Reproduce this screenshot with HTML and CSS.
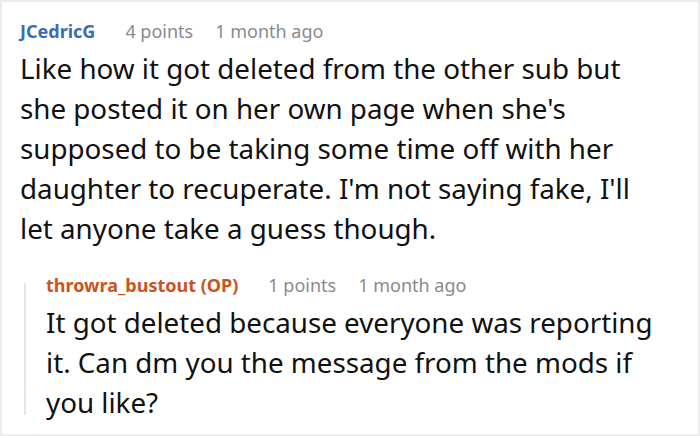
FILE: index.html
```html
<!DOCTYPE html>
<html>
<head>
<meta charset="utf-8">
<link rel="stylesheet" href="styles.css">
</head>
<body>
<div class="card">
  <div class="comment">
    <div class="meta">
      <span class="author">JCedricG</span>
      <span class="info">4 points</span>
      <span class="info">1 month ago</span>
    </div>
    <p class="text">Like how it got deleted from the other sub but she posted it on her own page when she's supposed to be taking some time off with her daughter to recuperate. I'm not saying fake, I'll let anyone take a guess though.</p>
    <div class="reply">
      <div class="meta">
        <span class="author op">throwra_bustout (OP)</span>
        <span class="info">1 points</span>
        <span class="info">1 month ago</span>
      </div>
      <p class="text">It got deleted because everyone was reporting it. Can dm you the message from the mods if you like?</p>
    </div>
  </div>
</div>
</body>
</html>
```

FILE: styles.css
```css
html, body {
  margin: 0;
  padding: 0;
  background: #ffffff;
}
.card {
  box-sizing: border-box;
  width: 700px;
  height: 436px;
  border: 2px solid #ececec;
  background: #fff;
  font-family: "Noto Sans", "Open Sans", sans-serif;
  overflow: hidden;
}
.comment {
  padding: 16px 34px 0 18px;
}
.meta {
  display: flex;
  gap: 22px;
  font-size: 18px;
  line-height: 26px;
}
.author {
  color: #3b6cb0;
  font-weight: 700;
  margin-right: 8px;
}
.author.op {
  color: #c9541e;
}
.info {
  color: #8a8a8a;
}
.text {
  margin: 4px 0 0 0;
  font-size: 27.75px;
  line-height: 40px;
  color: #111;
}
.reply {
  position: relative;
  margin-top: 24px;
  margin-left: 4px;
  padding-left: 22px;
}
.reply::before {
  content: "";
  position: absolute;
  left: 0;
  top: 11px;
  bottom: 7px;
  width: 2px;
  background: #e6e6e6;
}
.reply .text {
  margin-top: 4px;
}
```
